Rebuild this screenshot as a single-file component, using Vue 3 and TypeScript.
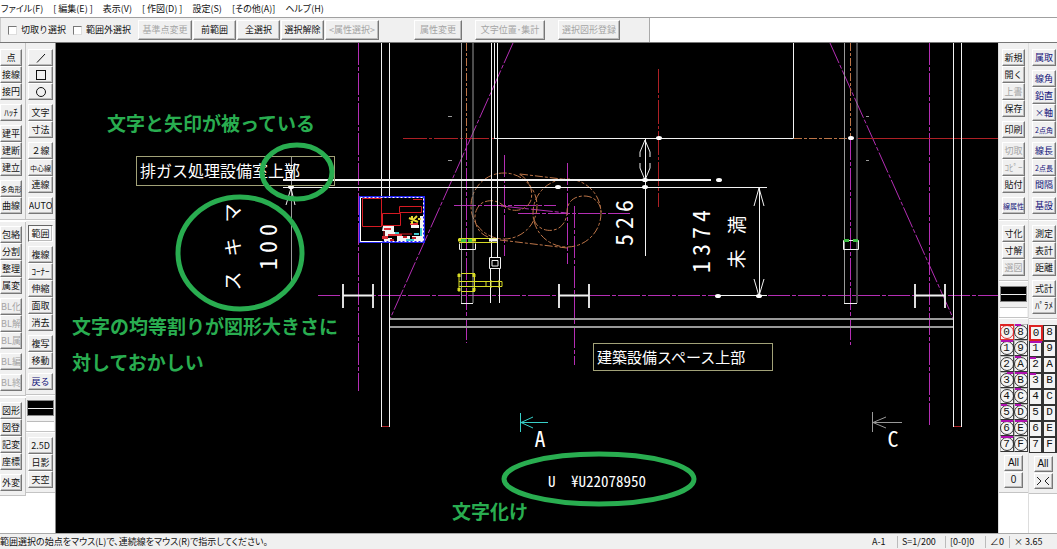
<script setup lang="ts">
interface Tool { label: string; off?: boolean; blue?: boolean; small?: boolean; down?: boolean; icon?: 'line' | 'box' | 'circle' }
type Group = Tool[]
type Panel = Group[]
interface Layer { label: string; mark?: 'full' | 'left' | 'right'; active?: boolean }

const t = (s: string, extra: Partial<Tool> = {}): Group => s.split(' ').map(label => ({ label, ...extra }))

const menus = ['ファイル(F)', '[ 編集(E) ]', '表示(V)', '[ 作図(D) ]', '設定(S)', '[その他(A)]', 'ヘルプ(H)']

const leftOuter: Panel[] = [
  [t('点 接線 接円'), t('ﾊｯﾁ'), t('建平 建断 建立'), [{ label: '多角形', small: true }, { label: '曲線' }]],
  [t('包絡 分割 整理 属変'), t('BL化 BL解 BL属', { off: true }), t('BL編', { off: true }), t('BL終', { off: true })],
  [t('図形 図登 記変 座標'), t('外変')],
]
const leftInner: Panel[] = [
  [
    [{ label: '線', icon: 'line' }, { label: '矩形', icon: 'box' }, { label: '円', icon: 'circle' }],
    t('文字 寸法'),
    [{ label: '２線' }, { label: '中心線', small: true }, { label: '連線' }],
    t('AUTO'),
  ],
  [t('範囲', { down: true }), t('複線 ｺｰﾅｰ 伸縮 面取 消去'), t('複写 移動'), t('戻る', { blue: true })],
]
const leftInnerEnd: Panel = [t('2.5D 日影 天空')]
const rightInner: Panel[] = [
  [
    [{ label: '新規' }, { label: '開く' }, { label: '上書', off: true }, { label: '保存' }],
    t('印刷'),
    [{ label: '切取', off: true }, { label: 'ｺﾋﾟｰ', off: true }, { label: '貼付' }],
    [{ label: '線属性', blue: true, small: true }],
  ],
  [[{ label: '寸化' }, { label: '寸解' }, { label: '選図', off: true }]],
]
const rightOuter: Panel[] = [
  [
    t('属取', { blue: true }),
    [...t('線角 鉛直 ×軸', { blue: true }), { label: '2点角', blue: true, small: true }],
    [{ label: '線長', blue: true }, { label: '2点長', blue: true, small: true }, { label: '間隔', blue: true }],
    t('基設', { blue: true }),
  ],
  [t('測定 表計 距離'), t('式計 ﾊﾟﾗﾒ')],
]

const layers: Layer[] = [
  { label: '0', mark: 'full', active: true }, { label: '8', mark: 'left' },
  { label: '1', mark: 'full' }, { label: '9' },
  { label: '2' }, { label: 'A', mark: 'left' },
  { label: '3', mark: 'right' }, { label: 'B', mark: 'full' },
  { label: '4' }, { label: 'C', mark: 'left' },
  { label: '5', mark: 'left' }, { label: 'D', mark: 'left' },
  { label: '6', mark: 'full' }, { label: 'E', mark: 'full' },
  { label: '7', mark: 'full' }, { label: 'F' },
]
const layerGroups: Layer[] = [
  { label: '0', active: true }, { label: '8' },
  { label: '1', mark: 'full' }, { label: '9' },
  { label: '2', mark: 'left' }, { label: 'A' },
  { label: '3', mark: 'left' }, { label: 'B' },
  { label: '4' }, { label: 'C' }, { label: '5' }, { label: 'D' },
  { label: '6' }, { label: 'E' }, { label: '7' }, { label: 'F' },
]

const dots: [number, number][] = [[659, 138], [851, 138], [719, 180], [645, 180], [645, 187], [558, 187], [291, 187], [718, 296], [759, 296]]
const beams = [343, 559, 915]

interface Vertical { chars: string; x: number; y: number; step: number; kind: string }
const verticals: Vertical[] = [
  { chars: '526', x: 624, y: 240, step: 17, kind: 'digit' },
  { chars: '1374', x: 701, y: 267, step: 17, kind: 'digit' },
  { chars: '100', x: 268, y: 264, step: 17, kind: 'digit' },
  { chars: '未満', x: 737, y: 259, step: 34, kind: 'kanji' },
  { chars: 'スキマ', x: 233, y: 281, step: 34, kind: 'kanji' },
]
</script>

<template>
  <div class="app">
    <nav class="menu" aria-label="メニュー">
      <button v-for="m in menus" :key="m" type="button">{{ m }}</button>
    </nav>
    <div class="bar">
      <div class="options">
        <label><input type="checkbox">切取り選択</label>
        <label><input type="checkbox">範囲外選択</label>
        <div class="set">
          <button class="w54" type="button" disabled>基準点変更</button>
          <button class="w43" type="button">前範囲</button>
          <button class="w43" type="button">全選択</button>
          <button class="w43" type="button">選択解除</button>
          <button class="w54" type="button" disabled>&lt;属性選択&gt;</button>
        </div>
        <div class="set far">
          <button class="w48" type="button" disabled>属性変更</button>
          <button class="w70" type="button" disabled>文字位置･集計</button>
          <button class="w62" type="button" disabled>選択図形登録</button>
        </div>
      </div>
    </div>

    <main class="work">
      <aside class="col outer">
        <section v-for="(p, i) in leftOuter" :key="i" class="panel">
          <div v-for="(g, j) in p" :key="j" class="group">
            <button v-for="b in g" :key="b.label" type="button" class="tool" :class="{ blue: b.blue, small: b.small }" :disabled="b.off">{{ b.label }}</button>
          </div>
        </section>
      </aside>
      <aside class="col inner">
        <section v-for="(p, i) in leftInner" :key="i" class="panel">
          <div v-for="(g, j) in p" :key="j" class="group">
            <button v-for="b in g" :key="b.label" type="button" class="tool" :class="{ blue: b.blue, small: b.small, down: b.down }" :aria-label="b.label">
              <svg v-if="b.icon" width="12" height="12" viewBox="0 0 12 12" fill="none" stroke="#111">
                <path v-if="b.icon === 'line'" d="M2 10.5L10 2" />
                <rect v-else-if="b.icon === 'box'" x="1.5" y="1.5" width="9" height="9" />
                <circle v-else cx="6" cy="6" r="4.5" />
              </svg>
              <template v-else>{{ b.label }}</template>
            </button>
          </div>
        </section>
        <section class="panel pen">
          <button type="button" class="penline" aria-label="線色・線種"></button>
          <div class="blank"></div>
        </section>
        <section class="panel">
          <div v-for="(g, j) in leftInnerEnd" :key="j" class="group">
            <button v-for="b in g" :key="b.label" type="button" class="tool">{{ b.label }}</button>
          </div>
        </section>
      </aside>

      <div class="canvas">
        <svg viewBox="56 43 942 490" role="img" aria-label="図面">
          <g class="magenta">
            <path d="M358.500 43V391M466.500 138V343M574.500 206V365M850.500 138V345M504.500 155V256M567.500 163V264" />
            <path d="M929.500 43V427" />
            <path d="M318 295.500H998M454 205.500H556M518 213.500H632M501 206L567 213M513 43L390 319M830 43L953 318" />
          </g>
          <g class="orange">
            <path d="M466.500 43V138M850.500 43V138M794 138.500H850" />
            <circle cx="504" cy="206" r="33" />
            <circle cx="567" cy="213" r="34" />
            <path d="M488 237C474 232 470 212 482 203C492 198 500 202 505 207C513 213 527 211 531 200C534 188 527 178 519 174" />
            <path d="M534 219C536 228 547 233 557 229C567 224 567 213 567 212C567 201 575 196 584 196C595 196 601 204 601 212" />
            <path d="M520 174L570 180M500 240L567 248" />
          </g>
          <g class="red">
            <path stroke-dasharray="24 2 3 2" d="M658.500 69V207M403 138.500H494" />
            <path d="M858 138.500H998M381 426.500H390M953 426.500H962" />
          </g>
          <g class="gray">
            <path d="M461.500 43V303M473 43V303M844.500 43V303M857 43V303M291.500 157V284" />
            <path stroke-width="2" d="M389 319H953M389 327H953" />
            <path d="M872.500 412V432M872 422.500H902M886 417L873 422.500L886 428M448 116.500H452M448 160.500H452M866 116.500H869M866 160.500H869" />
          </g>
          <g class="white">
            <path d="M381.500 43V427M389.500 43V427M953.500 43V427M961.500 43V427M491.500 43V257M494.500 43V138M497.500 43V257" />
            <path d="M494 138.500H793.500V43M283 187.500H767M718 295.500H767M461 303.500H473M844 303.500H857" />
            <path stroke-width="2" d="M283 180H711" />
            <path d="M645.500 138V256M759.500 188V296M645 140L640 152V157M645 140L650 152V157M645 180L640 168V163M645 180L650 168V163" />
            <path d="M759 188L754 206M759 188L764 206M759 296L754 279M759 296L764 279M291 188L286 205M291 188L295 205M286 163L291 177L295 163" />
            <path d="M489.500 257.500H500.500V268.500H489.500ZM492 260.500H498V266H492ZM490.500 268V303M499.500 268V303M459.500 243.500V249.500H475.500V243.500M843.500 240.500H858.500V249.500H843.500Z" />
          </g>
          <g v-for="x in beams" :key="x" class="white">
            <rect :x="x - 1" y="284" width="2" height="24" class="soft" />
            <rect :x="x + 29" y="284" width="2" height="24" class="soft" />
            <path :d="`M${x} 295.500H${x + 30}`" stroke-width="2" />
          </g>
          <g class="yellow">
            <path d="M459 273V292M474.500 273V292M459 281.500H502V286.500H459M461 273.500H475M461 291.500H475M486 281V286M491 280V288M499 280V288" />
            <path stroke-width="3" d="M458 240H464M470 240H476M459 277V274M459 291V288M474 277V274M474 291V288" />
            <path d="M459 238.500H497M459 242.500H497" />
          </g>
          <path class="green" d="M461 240.500H466M468 240.500H472M844 240.500H849M853 240.500H858" />
          <path class="white" stroke-width="3" d="M489 240H497" />
          <g fill="#fff">
            <ellipse v-for="(d, i) in dots" :key="i" :cx="d[0]" :cy="d[1]" rx="3" ry="2" />
          </g>

          <rect x="360" y="197" width="64" height="45" fill="#000" stroke="#2222ee" stroke-width="2" />
          <rect x="360.500" y="197.500" width="63" height="44" fill="none" stroke="#fff" stroke-dasharray="2 2" />
          <path d="M360.500 199V241.500H381" fill="none" stroke="#fff" />
          <path d="M362.500 198.500H381.500V226.500H362.500ZM382.500 213.500H400.500V225.500H382.500ZM399.500 206.500H421.500V212.500H399.500ZM413 199.500H422M384 226V240M388 234H412" fill="none" stroke="#d51a22" />
          <g>
            <path d="M383 226H394V232H397V236H385V231H382ZM397 236H410V241H397ZM411 225H419V228H411ZM420 216H423V241H412V236H420ZM384 238H392V241H384Z" fill="#f4f4f4" />
            <path d="M384 228H391V230H384ZM388 234H402V236H388ZM382 236H388V239H382ZM410 223H418V225H410Z" fill="#df3038" />
            <path d="M409 218L418 222M412 216V224M417 216L411 222M418 219H421" fill="none" stroke="#e5dc35" stroke-width="2" />
            <path d="M395 233H399M406 240H414M421 228V236M414 234H419" stroke="#42cbd0" stroke-width="2" />
            <path d="M403 237H407M412 238H416M390 240H394" stroke="#c3212a" stroke-width="2" />
          </g>

          <path d="M520.500 413V432M521 422.500H548M533 417L521 422.500L533 428" fill="none" stroke="#38cfc8" />
          <rect class="frame" x="136.500" y="156.500" width="198" height="29" />
          <rect class="frame" x="593.500" y="343.500" width="179" height="27" />
          <text class="label" x="140" y="177">排ガス処理設備室上部</text>
          <text class="label second" x="597" y="363">建築設備スペース上部</text>
          <text class="letter" x="540" y="447">A</text>
          <text class="letter" x="893" y="447">C</text>
          <text class="code" x="548" y="487">U</text>
          <text class="code" x="571" y="487">¥U22078950</text>

          <g v-for="v in verticals" :key="v.chars" :transform="`translate(${v.x} ${v.y}) rotate(-90)`">
            <text v-for="(c, i) in v.chars.split('')" :key="i" :class="v.kind" :x="i * v.step" :y="v.kind === 'digit' ? 9 : 7">{{ c }}</text>
          </g>

          <g class="note">
            <ellipse cx="297" cy="172" rx="35" ry="27" />
            <ellipse cx="240" cy="253" rx="62" ry="56" />
            <ellipse cx="599" cy="479" rx="95" ry="25" />
            <text x="107" y="131">文字と矢印が被っている</text>
            <text x="72" y="334">文字の均等割りが図形大きさに</text>
            <text x="72" y="370">対しておかしい</text>
            <text x="452" y="519">文字化け</text>
          </g>
        </svg>
      </div>

      <aside class="col right">
        <section v-for="(p, i) in rightInner" :key="i" class="panel">
          <div v-for="(g, j) in p" :key="j" class="group">
            <button v-for="b in g" :key="b.label" type="button" class="tool" :class="{ blue: b.blue, small: b.small }" :disabled="b.off">{{ b.label }}</button>
          </div>
        </section>
        <section class="panel pen">
          <button type="button" class="penline" aria-label="線属性"></button>
          <div class="blank"></div>
        </section>
        <section class="panel layers">
          <div class="grid round">
            <button v-for="l in layers" :key="l.label" type="button" :class="[l.mark, { active: l.active }]"><span>{{ l.label }}</span></button>
          </div>
          <button type="button" class="tool short">All</button>
          <button type="button" class="tool short">0</button>
        </section>
      </aside>
      <aside class="col right edge">
        <section v-for="(p, i) in rightOuter" :key="i" class="panel">
          <div v-for="(g, j) in p" :key="j" class="group">
            <button v-for="b in g" :key="b.label" type="button" class="tool" :class="{ blue: b.blue, small: b.small }">{{ b.label }}</button>
          </div>
        </section>
        <section class="panel layers">
          <div class="grid square">
            <button v-for="l in layerGroups" :key="l.label" type="button" :class="[l.mark, { active: l.active }]"><span>{{ l.label }}</span></button>
          </div>
          <button type="button" class="tool short">All</button>
          <button type="button" class="tool short" aria-label="切替">
            <svg width="14" height="10" viewBox="0 0 14 10" fill="none" stroke="#222"><path d="M1 1L5 5L1 9M13 1L9 5L13 9" /></svg>
          </button>
        </section>
      </aside>
    </main>

    <footer class="status">
      <p>範囲選択の始点をマウス(L)で、連続線をマウス(R)で指示してください。</p>
      <span class="s1">A-1</span>
      <span class="s2">S=1/200</span>
      <span class="s3">[0-0]0</span>
      <span class="s4">∠0</span>
      <span class="s2">× 3.65</span>
    </footer>
  </div>
</template>

<style>
body { background: #fff; }
</style>

<style scoped>
.app {
  display: flex;
  flex-direction: column;
  min-height: 100vh;
  overflow: hidden;
  background: #fff;
  color: #111;
  font: 9px/12px "Noto Sans CJK JP", sans-serif;
}
* { box-sizing: border-box; }
button {
  margin: 0;
  padding: 0;
  font: inherit;
  color: inherit;
  white-space: nowrap;
}
.menu {
  display: flex;
  gap: 10px;
  height: 17px;
  padding: 3px 1px 0;
  font-feature-settings: "palt";
}
.menu button { height: 12px; border: 0; background: none; }
.bar {
  display: flex;
  height: 26px;
  border-top: 1px solid #a0a0a0;
  border-bottom: 1px solid #777;
}
.options {
  display: flex;
  align-items: center;
  width: 650px;
  padding-left: 7px;
  background: #f0f0f0;
  border-left: 1px solid #ccc;
  border-right: 1px solid #aaa;
}
.options label { display: flex; align-items: center; gap: 4px; width: 65px; white-space: nowrap; }
.options input {
  appearance: none;
  width: 9px;
  height: 9px;
  margin: 0;
  background: #fff;
  border: 1px solid #777;
  border-right-color: #ddd;
  border-bottom-color: #ddd;
}
.set { display: flex; gap: 1px; }
.set.far { gap: 13px; margin-left: 35px; }
.set button { height: 20px; }
.w43 { width: 43px; }
.w48 { width: 48px; }
.w54 { width: 54px; }
.w62 { width: 62px; }
.w70 { width: 70px; }
.set button, .tool {
  background: #f0f0f0;
  border: 1px solid #fff;
  border-right-color: #777;
  border-bottom-color: #777;
  box-shadow: inset -1px -1px #bbb;
}
.set button:disabled, .tool:disabled { color: #a5a5a5; }
.work { display: flex; flex: 1; align-items: stretch; }
.col { display: flex; flex: none; flex-direction: column; }
.outer { width: 26px; }
.inner { width: 30px; border-right: 1px solid #888; }
.col.right { width: 30px; border-left: 1px solid #ddd; }
.col.edge { width: 29px; }
.panel {
  display: flex;
  flex-direction: column;
  gap: 4px;
  padding: 4px 3px 4px 0;
  background: #f0f0f0;
  border-bottom: 1px solid #c4c4c4;
  border-right: 1px solid #c4c4c4;
}
.panel + .panel { margin-top: 1px; }
.panel:first-child { padding-top: 6px; padding-bottom: 5px; }
.inner .panel { padding-left: 2px; padding-right: 2px; border-right: 0; }
.right .panel { padding-left: 3px; padding-right: 3px; border-right: 0; }
.edge .panel { padding-right: 1px; }
.outer .panel + .panel { margin-top: 2px; }
.group { display: flex; flex-direction: column; }
.tool {
  display: flex;
  align-items: center;
  justify-content: center;
  height: 17px;
  overflow: hidden;
}
.small { font-size: 7px; }
.blue { color: #101078; }
.down {
  background: #f8f8f8;
  border-color: #666 #fff #fff #666;
}
.inner .panel.pen, .right .panel.pen {
  gap: 5px;
  padding: 4px 1px 0;
}
.penline {
  height: 16px;
  border: 1px solid #888;
  background: linear-gradient(#000 7px, #eee 7px, #eee 8px, #000 8px);
}
.blank { height: 10px; background: #fff; border-top: 1px solid #bbb; }
.right .panel.layers { align-items: center; gap: 1px; padding: 5px 0 4px; }
.grid {
  display: grid;
  grid-template-columns: 14px 14px;
  grid-auto-rows: 16px;
  margin-bottom: 2px;
  font: 11px/13px "Liberation Mono", monospace;
}
.grid button {
  position: relative;
  border: 1px solid #bbb;
  border-right-color: #444;
  border-bottom-color: #333;
  background: #f4f4f4;
}
.grid span { display: block; height: 14px; }
.round span { margin: 0 -1px; border: 1px solid #333; border-radius: 50%; }
.square button { border: 1px solid #333; border-right-width: 2px; }
.grid button::before {
  content: "";
  position: absolute;
  top: -1px;
  left: 0;
  height: 2px;
  background: #b010b0;
}
.grid .full::before { width: 12px; }
.grid .left::before { width: 6px; }
.grid .right::before { width: 6px; left: 6px; }
.round .active { border-color: #d33; }
.round .active span { border-color: #d33; }
.round .active::before { background: #d22; }
.square .active { border: 2px solid #d22; }
.square .active span { height: 12px; line-height: 12px; }
.short { width: 19px; height: 16px; font: 10px/12px "Liberation Sans", sans-serif; }
.canvas { flex: 1; min-width: 0; background: #000; }
.canvas svg { display: block; width: 100%; height: auto; }
.magenta { fill: none; stroke: #b42eb4; stroke-dasharray: 22 2 4 2; }
.orange { fill: none; stroke: #bd7548; stroke-dasharray: 8 2 3 2; }
.red { fill: none; stroke: #ad2025; }
.gray { fill: none; stroke: #999; }
.white { fill: none; stroke: #f2f2f2; }
.soft { fill: #ddd; stroke: none; }
.yellow { fill: none; stroke: #d8dc25; }
.green { fill: none; stroke: #3dbd43; stroke-width: 3; }
.frame { fill: none; stroke: #a2a278; }
.canvas text { fill: #fff; font-family: "Noto Sans CJK JP", sans-serif; }
.canvas .label { font-size: 16px; }
.canvas .second { font-size: 15px; }
.canvas .digit, .canvas .letter, .canvas .code {
  font-family: "Liberation Sans Narrow", "Noto Sans CJK JP", sans-serif;
  font-feature-settings: "hwid";
}
.canvas .digit { font-size: 24px; text-anchor: middle; }
.canvas .letter { font-size: 22px; text-anchor: middle; }
.canvas .code { font-size: 15px; }
.canvas .kanji { font-size: 19px; text-anchor: middle; }
.note ellipse { fill: none; stroke: #29ad50; stroke-width: 5; }
.canvas .note text { fill: #29ad50; font-size: 19px; font-weight: 700; }
.status {
  display: flex;
  align-items: center;
  height: 16px;
  background: #f0f0f0;
  border-top: 1px solid #aaa;
}
.status p { flex: 1; margin: 0; font-feature-settings: "palt"; }
.status span { padding-left: 4px; border-left: 1px solid #bbb; white-space: nowrap; }
.status .s1 { width: 29px; border-left: 0; }
.s2 { width: 48px; }
.s3 { width: 40px; }
.s4 { width: 24px; }
</style>
